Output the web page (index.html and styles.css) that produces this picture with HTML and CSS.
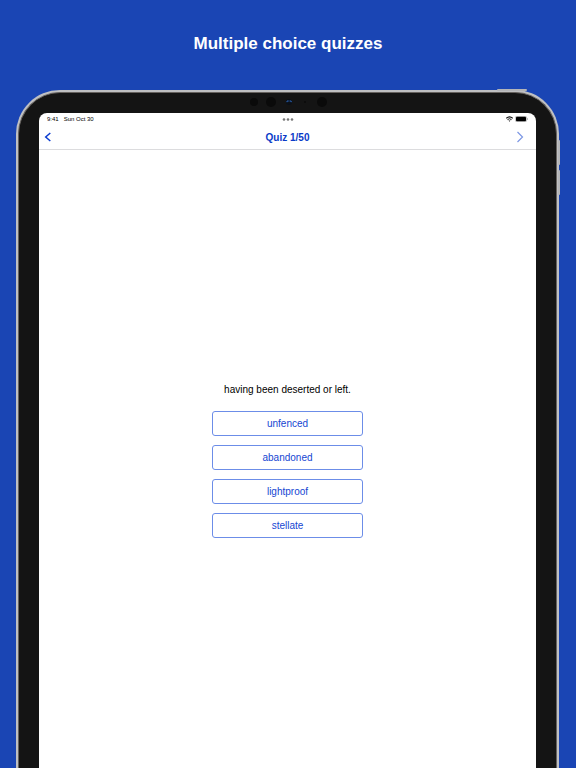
FILE: index.html
```html
<!DOCTYPE html>
<html lang="en">
<head>
    <meta charset="UTF-8">
    <meta name="viewport" content="width=device-width, initial-scale=1.0">
    <title>Multiple choice quizzes</title>
    <link rel="stylesheet" href="styles.css">
</head>
<body>
    <h1 class="headline">Multiple choice quizzes</h1>

    <div class="tablet">
        <span class="side-btn power"></span>
        <span class="side-btn volume-up"></span>
        <span class="side-btn volume-down"></span>

        <div class="bezel">
            <svg class="camera" width="80" height="12" viewBox="0 0 80 12" aria-hidden="true">
                <circle cx="6" cy="6" r="4" fill="#0a0a0a"/>
                <circle cx="23" cy="6" r="5" fill="#0a0a0a"/>
                <circle cx="41" cy="6" r="3" fill="#0c1016"/>
                <path d="M39 6.2V5h1.8M41.5 5h1.7v1.2" fill="none" stroke="#2a62b4" stroke-width="1"/>
                <circle cx="57" cy="6" r="1" fill="#0a0a0a"/>
                <circle cx="74" cy="6" r="5" fill="#0a0a0a"/>
            </svg>

            <div class="screen">
                <div class="status-bar">
                    <div class="status-left">
                        <span>9:41</span>
                        <span>Sun Oct 30</span>
                    </div>
                    <svg class="dots" width="12" height="4" viewBox="0 0 12 4" aria-hidden="true">
                        <circle cx="2" cy="2.5" r="1.3"/>
                        <circle cx="6" cy="2.5" r="1.3"/>
                        <circle cx="10" cy="2.5" r="1.3"/>
                    </svg>
                    <div class="status-right">
                        <svg width="7" height="6" viewBox="0 0 7 6" fill="none" stroke="#111" aria-hidden="true">
                            <path d="M.3 2.3Q3.5-.6 6.7 2.3" stroke-width="1.2"/>
                            <path d="M1.5 3.6Q3.5 1.8 5.5 3.6" stroke-width="1"/>
                            <path d="M2.5 4.4h2L3.5 5.7z" fill="#111" stroke="none"/>
                        </svg>
                        <svg width="13" height="6" viewBox="0 0 13 6" aria-hidden="true">
                            <rect x=".3" y=".3" width="11.4" height="5.4" rx="1.6" fill="#fff" stroke="#999" stroke-width=".6"/>
                            <rect x="1" y=".8" width="10" height="4.4" rx="1" fill="#000"/>
                            <path d="M12.4 2.1v1.8" stroke="#999" stroke-width=".7"/>
                        </svg>
                    </div>
                </div>

                <header class="nav-bar">
                    <button type="button" class="nav-btn" aria-label="Back">
                        <svg width="8" height="10" viewBox="0 0 8 10"><path d="M6.3 1L1.7 5l4.6 4" stroke-width="1.5"/></svg>
                    </button>
                    <h2 class="nav-title">Quiz 1/50</h2>
                    <button type="button" class="nav-btn next" aria-label="Next">
                        <svg width="8" height="12" viewBox="0 0 8 12"><path d="M1.5 1l5 5-5 5" stroke-width="1.2"/></svg>
                    </button>
                </header>

                <main class="quiz">
                    <p class="question">having been deserted or left.</p>
                    <div class="answers">
                        <button type="button" class="answer">unfenced</button>
                        <button type="button" class="answer">abandoned</button>
                        <button type="button" class="answer">lightproof</button>
                        <button type="button" class="answer">stellate</button>
                    </div>
                </main>
            </div>
        </div>
    </div>
</body>
</html>
```

FILE: styles.css
```css
* {
    box-sizing: border-box;
    font-family: "Liberation Sans", Arial, sans-serif;
}

body {
    margin: 0;
    min-height: 100vh;
    display: flex;
    flex-direction: column;
    background-color: #1a45b4;
    color: #000;
}

.headline {
    margin: 0;
    padding: 32px 16px 34px;
    font-size: 17px;
    line-height: 24px;
    font-weight: bold;
    text-align: center;
    color: #fff;
}

.tablet {
    position: relative;
    flex: 1;
    display: flex;
    margin: 0 17px 0 16px;
    padding: 2px 2px 0;
    background-color: #bfc0c2;
    border-radius: 44px 44px 0 0;
}

.side-btn {
    position: absolute;
    background-color: #b4b5b8;
    border-radius: 1px;
}

.power {
    top: -1px;
    right: 32px;
    width: 30px;
    height: 2px;
}

.volume-up,
.volume-down {
    right: -1px;
    width: 2px;
    height: 25px;
}

.volume-up {
    top: 50px;
}

.volume-down {
    top: 80px;
}

.bezel {
    position: relative;
    flex: 1;
    display: flex;
    padding: 20px 20px 0;
    background-color: #141414;
    border: 1px solid #66625f;
    border-bottom: none;
    border-radius: 42px 42px 0 0;
}

.camera {
    position: absolute;
    top: 3px;
    left: 50%;
    transform: translateX(-50%);
}

.screen {
    flex: 1;
    display: flex;
    flex-direction: column;
    background-color: #fff;
    border-radius: 8px 8px 0 0;
}

.status-bar {
    display: grid;
    grid-template-columns: 1fr auto 1fr;
    align-items: center;
    height: 12px;
    padding: 0 8px;
    font-size: 6px;
    line-height: 12px;
    color: #000;
}

.status-left {
    display: flex;
    gap: 5px;
}

.status-right {
    display: flex;
    align-items: center;
    justify-content: flex-end;
    gap: 2px;
}

.dots {
    fill: #777;
}

.nav-bar {
    display: grid;
    grid-template-columns: 1fr auto 1fr;
    align-items: center;
    height: 25px;
    padding: 0 5px;
    border-bottom: 1px solid #dcdcde;
}

.nav-btn {
    justify-self: start;
    display: flex;
    padding: 2px 0;
    border: none;
    background: none;
    cursor: pointer;
}

.nav-btn svg {
    fill: none;
    stroke: #0a3bd0;
}

.nav-btn.next {
    justify-self: end;
    padding-right: 7px;
}

.nav-btn.next svg {
    stroke: #7c97e4;
}

.nav-title {
    margin: 0;
    padding-top: 2px;
    font-size: 10px;
    line-height: 12px;
    color: #0a3bc8;
}

.quiz {
    flex: 1;
    display: flex;
    flex-direction: column;
    align-items: center;
    justify-content: center;
    gap: 14px;
}

.question {
    margin: 0;
    padding-top: 2px;
    font-size: 10px;
    line-height: 14px;
}

.answers {
    display: flex;
    flex-direction: column;
    gap: 9px;
    width: 30%;
    min-width: 151px;
}

.answer {
    height: 25px;
    padding: 2px 0 0;
    font-size: 10px;
    line-height: 12px;
    color: #1546d2;
    background-color: #fff;
    border: 1px solid #6c8de8;
    border-radius: 3px;
    cursor: pointer;
}
```
